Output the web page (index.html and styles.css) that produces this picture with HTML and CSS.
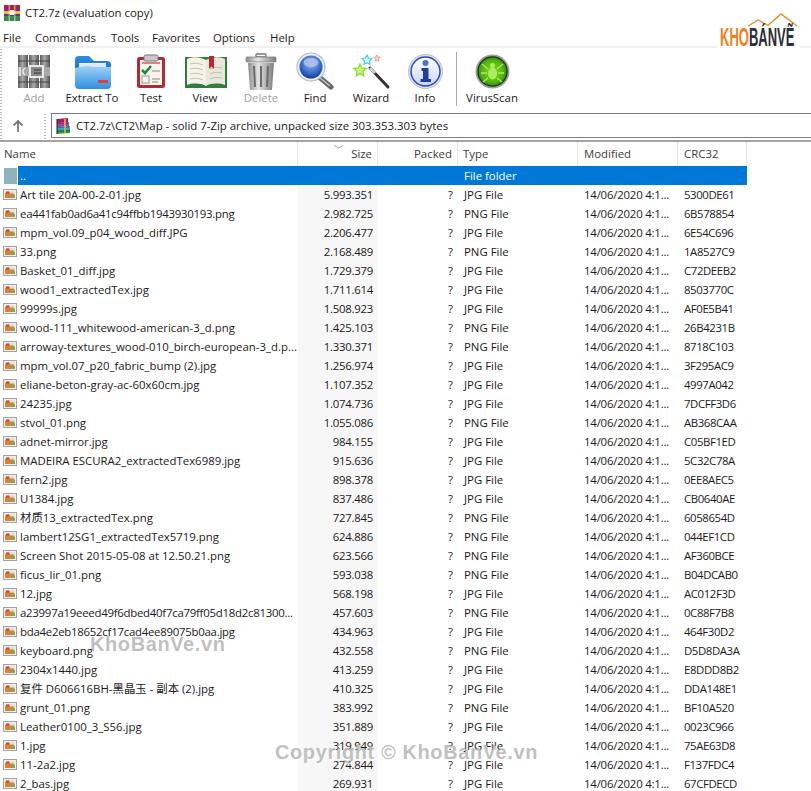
FILE: index.html
```html
<!DOCTYPE html>
<html lang="en">
<head>
<meta charset="utf-8">
<title>CT2.7z (evaluation copy)</title>
<link rel="stylesheet" href="styles.css">
</head>
<body>
<svg class="defs" aria-hidden="true">
  <defs>
    <linearGradient id="gBook" x1="0" y1="0" x2="1" y2="0"><stop offset="0" stop-color="#5f5f5f"/><stop offset=".45" stop-color="#a8a8a8"/><stop offset="1" stop-color="#555"/></linearGradient>
    <linearGradient id="gFolder" x1="0" y1="0" x2="0" y2="1"><stop offset="0" stop-color="#9fd2f7"/><stop offset="1" stop-color="#2f8fe0"/></linearGradient>
    <linearGradient id="gFolderBack" x1="0" y1="0" x2="0" y2="1"><stop offset="0" stop-color="#2e8fe4"/><stop offset="1" stop-color="#1565b8"/></linearGradient>
    <linearGradient id="gTrash" x1="0" y1="0" x2="1" y2="0"><stop offset="0" stop-color="#8d8d8d"/><stop offset=".4" stop-color="#e4e4e4"/><stop offset="1" stop-color="#7d7d7d"/></linearGradient>
    <radialGradient id="gLens" cx=".5" cy=".35" r=".65"><stop offset="0" stop-color="#9db6ec"/><stop offset=".6" stop-color="#3e71cc"/><stop offset="1" stop-color="#123d97"/></radialGradient>
    <radialGradient id="gVirus" cx=".5" cy=".5" r=".55"><stop offset="0" stop-color="#84dc22"/><stop offset=".7" stop-color="#54b512"/><stop offset="1" stop-color="#2d7d0c"/></radialGradient>
    <linearGradient id="gInfo" x1="0" y1="0" x2="0" y2="1"><stop offset="0" stop-color="#ffffff"/><stop offset="1" stop-color="#c9d5f2"/></linearGradient>
    <symbol id="file" viewBox="0 0 14 11">
      <rect x=".5" y=".5" width="13" height="10" fill="#f2f2f2" stroke="#a2a2a2"/>
      <rect x="2" y="2" width="10" height="7" fill="#e6e0d4"/>
      <path d="M2 9 L2 4 L6 2.500 L8 5 L10 4 L12 7 V9 Z" fill="#d9803a"/>
      <rect x="3" y="2.500" width="3" height="2" fill="#c9473a"/>
      <rect x="8" y="5.500" width="3.500" height="3.500" fill="#8aa24a"/>
    </symbol>
  </defs>
</svg>

<header class="title-bar">
  <svg class="title-icon" viewBox="0 0 16 16">
    <rect x="0" y="0" width="16" height="5" fill="#a8263a"/>
    <rect x="0" y="5" width="16" height="6" fill="#6a2f9e"/>
    <rect x="0" y="11" width="16" height="5" fill="#3f8a4a"/>
    <rect x="0" y="6" width="16" height="3" fill="#e8c23a"/>
    <rect x="6" y="5" width="4" height="5" fill="#fff3c0"/>
    <path d="M5.200 0V16M10.800 0V16" stroke="#fff" stroke-width=".7"/>
  </svg>
  <span class="title-text">CT2.7z (evaluation copy)</span>
</header>

<nav class="menu-bar">
  <span>File</span>
  <span>Commands</span>
  <span>Tools</span>
  <span>Favorites</span>
  <span>Options</span>
  <span>Help</span>
</nav>

<section class="toolbar">
  <div class="tool tool-add disabled">
    <svg class="tool-icon" viewBox="0 0 44 38">
      <rect x="6" y="3" width="10" height="33" fill="url(#gBook)"/>
      <rect x="17" y="3" width="10" height="33" fill="url(#gBook)"/>
      <rect x="28" y="3" width="10" height="33" fill="url(#gBook)"/>
      <path d="M6 9H38M6 30H38" stroke="#444" stroke-width="1"/>
      <rect x="6" y="15" width="32" height="9" fill="#a8a8a8"/>
      <rect x="18" y="14" width="13" height="11" fill="#8a8a8a" stroke="#f2f2f2" stroke-width="1.800"/>
      <path d="M22 18H29M22 21H29" stroke="#333" stroke-width="1"/>
      <path d="M8 15v9M13 16a4 4 0 0 0 0 7" stroke="#f0f0f0" stroke-width="1.400" fill="none"/>
    </svg>
    <span class="tool-label">Add</span>
  </div>
  <div class="tool tool-extract">
    <svg class="tool-icon" viewBox="0 0 44 38">
      <path d="M5 8a4 4 0 0 1 4-4h10l5 5h13a4 4 0 0 1 4 4v10H5Z" fill="url(#gFolderBack)"/>
      <path d="M9 11H36V22H9Z" fill="#f2f7fb"/>
      <path d="M9 13H36M9 15H36M9 17H36M9 19H36" stroke="#b9cfe3" stroke-width=".7"/>
      <path d="M5 16l5-1 8-1 5 1H41V33a4 4 0 0 1-4 4H9a4 4 0 0 1-4-4Z" fill="url(#gFolder)"/>
      <rect x="28" y="28" width="10" height="3" fill="#d8433f"/>
    </svg>
    <span class="tool-label">Extract To</span>
  </div>
  <div class="tool tool-test">
    <svg class="tool-icon" viewBox="0 0 44 38">
      <rect x="8" y="5" width="28" height="31" rx="2.500" fill="#a92d33"/>
      <rect x="11" y="8" width="22" height="25" fill="#f7f3ec"/>
      <rect x="15" y="3" width="14" height="6" rx="1.500" fill="#c9c9c9" stroke="#777"/>
      <path d="M13 18l3 3 6-7" fill="none" stroke="#1e8a30" stroke-width="2.600"/>
      <rect x="13" y="24" width="7" height="7" fill="none" stroke="#999"/>
      <path d="M23 19H31M23 27H31M23 30H29" stroke="#888" stroke-width="1.200"/>
      <path d="M13 11H31" stroke="#c8564e" stroke-width="1.400"/>
    </svg>
    <span class="tool-label">Test</span>
  </div>
  <div class="tool tool-view">
    <svg class="tool-icon" viewBox="0 0 44 38">
      <path d="M2 5H44V36H2Z" fill="#2f7d3b"/>
      <path d="M4 7C10 4 18 5 23 8V34C18 31 10 31 4 33Z" fill="#f4f2e9"/>
      <path d="M42 7C36 4 28 5 23 8V34C28 31 36 31 42 33Z" fill="#e9e6da"/>
      <path d="M7 12C11 11 16 11 20 13M7 17C11 16 16 16 20 18M7 22C11 21 16 21 20 23M7 27C11 26 16 26 20 28M27 17C31 15 35 15 39 16M27 22C31 20 35 20 39 21M27 27C31 25 35 25 39 26" stroke="#c6c2b2" fill="none"/>
      <path d="M26 4H31V17L28.500 14.500L26 17Z" fill="#b5283a"/>
    </svg>
    <span class="tool-label">View</span>
  </div>
  <div class="tool tool-delete disabled">
    <svg class="tool-icon" viewBox="0 0 44 38">
      <rect x="17" y="2" width="10" height="3" rx="1" fill="none" stroke="#777" stroke-width="1.400"/>
      <rect x="7" y="5" width="30" height="5" rx="1" fill="url(#gTrash)" stroke="#777" stroke-width=".7"/>
      <path d="M9 11H35L33 38H11Z" fill="url(#gTrash)"/>
      <path d="M15 14L16 35M22 14V35M29 14L28 35" stroke="#6a6a6a" stroke-width="2"/>
    </svg>
    <span class="tool-label">Delete</span>
  </div>
  <div class="tool tool-find">
    <svg class="tool-icon" viewBox="0 0 44 38">
      <path d="M25 24L38 35" stroke="#666" stroke-width="5" stroke-linecap="round"/>
      <path d="M26 25L37 34" stroke="#c4c4c4" stroke-width="1.500"/>
      <circle cx="18" cy="15" r="14" fill="#e9edf4" stroke="#b4bbc6" stroke-width="1.200"/>
      <circle cx="18" cy="15" r="11.500" fill="url(#gLens)"/>
      <ellipse cx="18" cy="10.500" rx="7.500" ry="4.500" fill="#b2c5ee" opacity=".8"/>
    </svg>
    <span class="tool-label">Find</span>
  </div>
  <div class="tool tool-wizard">
    <svg class="tool-icon" viewBox="0 0 44 38">
      <path d="M21 16L39 35" stroke="#333" stroke-width="3" stroke-linecap="round"/>
      <path d="M21 16L26 21" stroke="#d0d0d0" stroke-width="3"/>
      <path d="M18 3L19.500 6 23 6.500 20.500 9 21 12.500 18 10.800 15 12.500 15.500 9 13 6.500 16.500 6Z" fill="#d6f8ff" stroke="#4ccbea" stroke-width="1.200"/>
      <path d="M11 12L12.800 16 17.200 16.500 14 19.500 14.800 24 11 21.800 7.200 24 8 19.500 4.800 16.500 9.200 16Z" fill="#c6f57a" stroke="#8ade3a" stroke-width="1.300"/>
      <path d="M28 3L29 5 31.300 5.300 29.600 6.900 30 9.200 28 8.100 26 9.200 26.400 6.900 24.700 5.300 27 5Z" fill="#f9d3d5" stroke="#e58b90" stroke-width=".8"/>
    </svg>
    <span class="tool-label">Wizard</span>
  </div>
  <div class="tool tool-info">
    <svg class="tool-icon" viewBox="0 0 44 38">
      <circle cx="22.500" cy="19.500" r="17" fill="#dfe3ea" stroke="#b9bec8"/>
      <circle cx="22.500" cy="19.500" r="14.500" fill="url(#gInfo)" stroke="#2b49b0" stroke-width="1.500"/>
      <circle cx="22.500" cy="11" r="3" fill="#4a73d0"/>
      <path d="M18.500 16H25.500V27H28V30H17.500V27H20V19H18.500Z" fill="#24409f"/>
    </svg>
    <span class="tool-label">Info</span>
  </div>
  <div class="tool-sep"></div>
  <div class="tool tool-virus">
    <svg class="tool-icon" viewBox="0 0 44 38">
      <circle cx="22.500" cy="19.500" r="17" fill="#9a9f98"/>
      <circle cx="22.500" cy="19.500" r="15.200" fill="#1e2e22"/>
      <circle cx="22.500" cy="19.500" r="14" fill="url(#gVirus)"/>
      <ellipse cx="22.500" cy="21.500" rx="4.500" ry="6" fill="#a9ee5e"/>
      <circle cx="22.500" cy="13.500" r="2.500" fill="#a9ee5e"/>
      <path d="M18 17L12 12M27 17L33 12M17 21H11M28 21H34M18 26L13 30M27 26L32 30" stroke="#a9ee5e" stroke-width="1.300"/>
    </svg>
    <span class="tool-label">VirusScan</span>
  </div>
</section>

<section class="address-row">
  <div class="up-cell">
    <svg class="up-icon" viewBox="0 0 12 14"><path d="M6 13V2M1.500 6.500L6 2L10.500 6.500" fill="none" stroke="#7a7a7a" stroke-width="1.800"/></svg>
  </div>
  <div class="address-box">
    <svg class="rar-icon" viewBox="0 0 16 16">
      <path d="M2 1L13 0V4L2 5Z" fill="#a3214f"/>
      <path d="M2 5L14 4V8L2 9Z" fill="#b03cb5"/>
      <path d="M2 9L15 8V12L2 13Z" fill="#2aa9c9"/>
      <path d="M2 12.500L15 11.500V15L2 16Z" fill="#3d9a3d"/>
      <path d="M2 1V16" stroke="#222" stroke-width="1"/>
      <path d="M2 5H13M2 9H14M2 13H15" stroke="#222" stroke-width=".6"/>
      <rect x="9" y="1" width="2" height="14" fill="#d9b84a" opacity=".8"/>
    </svg>
    <span>CT2.7z\CT2\Map - solid 7-Zip archive, unpacked size 303.353.303 bytes</span>
  </div>
</section>

<main class="list">
  <div class="list-head">
    <span class="c-name head-cell">Name</span>
    <span class="c-size head-cell sorted">Size</span>
    <span class="c-packed head-cell">Packed</span>
    <span class="c-type head-cell">Type</span>
    <span class="c-mod head-cell">Modified</span>
    <span class="c-crc head-cell">CRC32</span>
  </div>
  <div class="row row-selected">
    <span class="c-name"><span class="folder-icon"></span><span class="name-sel">..</span></span>
    <span class="c-size"></span><span class="c-packed"></span>
    <span class="c-type">File folder</span><span class="c-mod"></span><span class="c-crc"></span>
  </div>
  <div class="row"><span class="c-name"><svg class="file-icon"><use href="#file"/></svg>Art tile 20A-00-2-01.jpg</span><span class="c-size">5.993.351</span><span class="c-packed">?</span><span class="c-type">JPG File</span><span class="c-mod">14/06/2020 4:1...</span><span class="c-crc">5300DE61</span></div>
  <div class="row"><span class="c-name hash"><svg class="file-icon"><use href="#file"/></svg>ea441fab0ad6a41c94ffbb1943930193.png</span><span class="c-size">2.982.725</span><span class="c-packed">?</span><span class="c-type">PNG File</span><span class="c-mod">14/06/2020 4:1...</span><span class="c-crc">6B578854</span></div>
  <div class="row"><span class="c-name"><svg class="file-icon"><use href="#file"/></svg>mpm_vol.09_p04_wood_diff.JPG</span><span class="c-size">2.206.477</span><span class="c-packed">?</span><span class="c-type">JPG File</span><span class="c-mod">14/06/2020 4:1...</span><span class="c-crc">6E54C696</span></div>
  <div class="row"><span class="c-name"><svg class="file-icon"><use href="#file"/></svg>33.png</span><span class="c-size">2.168.489</span><span class="c-packed">?</span><span class="c-type">PNG File</span><span class="c-mod">14/06/2020 4:1...</span><span class="c-crc">1A8527C9</span></div>
  <div class="row"><span class="c-name"><svg class="file-icon"><use href="#file"/></svg>Basket_01_diff.jpg</span><span class="c-size">1.729.379</span><span class="c-packed">?</span><span class="c-type">JPG File</span><span class="c-mod">14/06/2020 4:1...</span><span class="c-crc">C72DEEB2</span></div>
  <div class="row"><span class="c-name"><svg class="file-icon"><use href="#file"/></svg>wood1_extractedTex.jpg</span><span class="c-size">1.711.614</span><span class="c-packed">?</span><span class="c-type">JPG File</span><span class="c-mod">14/06/2020 4:1...</span><span class="c-crc">8503770C</span></div>
  <div class="row"><span class="c-name"><svg class="file-icon"><use href="#file"/></svg>99999s.jpg</span><span class="c-size">1.508.923</span><span class="c-packed">?</span><span class="c-type">JPG File</span><span class="c-mod">14/06/2020 4:1...</span><span class="c-crc">AF0E5B41</span></div>
  <div class="row"><span class="c-name"><svg class="file-icon"><use href="#file"/></svg>wood-111_whitewood-american-3_d.png</span><span class="c-size">1.425.103</span><span class="c-packed">?</span><span class="c-type">PNG File</span><span class="c-mod">14/06/2020 4:1...</span><span class="c-crc">26B4231B</span></div>
  <div class="row"><span class="c-name"><svg class="file-icon"><use href="#file"/></svg>arroway-textures_wood-010_birch-european-3_d.p...</span><span class="c-size">1.330.371</span><span class="c-packed">?</span><span class="c-type">PNG File</span><span class="c-mod">14/06/2020 4:1...</span><span class="c-crc">8718C103</span></div>
  <div class="row"><span class="c-name"><svg class="file-icon"><use href="#file"/></svg>mpm_vol.07_p20_fabric_bump (2).jpg</span><span class="c-size">1.256.974</span><span class="c-packed">?</span><span class="c-type">JPG File</span><span class="c-mod">14/06/2020 4:1...</span><span class="c-crc">3F295AC9</span></div>
  <div class="row"><span class="c-name"><svg class="file-icon"><use href="#file"/></svg>eliane-beton-gray-ac-60x60cm.jpg</span><span class="c-size">1.107.352</span><span class="c-packed">?</span><span class="c-type">JPG File</span><span class="c-mod">14/06/2020 4:1...</span><span class="c-crc">4997A042</span></div>
  <div class="row"><span class="c-name"><svg class="file-icon"><use href="#file"/></svg>24235.jpg</span><span class="c-size">1.074.736</span><span class="c-packed">?</span><span class="c-type">JPG File</span><span class="c-mod">14/06/2020 4:1...</span><span class="c-crc">7DCFF3D6</span></div>
  <div class="row"><span class="c-name"><svg class="file-icon"><use href="#file"/></svg>stvol_01.png</span><span class="c-size">1.055.086</span><span class="c-packed">?</span><span class="c-type">PNG File</span><span class="c-mod">14/06/2020 4:1...</span><span class="c-crc">AB368CAA</span></div>
  <div class="row"><span class="c-name"><svg class="file-icon"><use href="#file"/></svg>adnet-mirror.jpg</span><span class="c-size">984.155</span><span class="c-packed">?</span><span class="c-type">JPG File</span><span class="c-mod">14/06/2020 4:1...</span><span class="c-crc">C05BF1ED</span></div>
  <div class="row"><span class="c-name"><svg class="file-icon"><use href="#file"/></svg>MADEIRA ESCURA2_extractedTex6989.jpg</span><span class="c-size">915.636</span><span class="c-packed">?</span><span class="c-type">JPG File</span><span class="c-mod">14/06/2020 4:1...</span><span class="c-crc">5C32C78A</span></div>
  <div class="row"><span class="c-name"><svg class="file-icon"><use href="#file"/></svg>fern2.jpg</span><span class="c-size">898.378</span><span class="c-packed">?</span><span class="c-type">JPG File</span><span class="c-mod">14/06/2020 4:1...</span><span class="c-crc">0EE8AEC5</span></div>
  <div class="row"><span class="c-name"><svg class="file-icon"><use href="#file"/></svg>U1384.jpg</span><span class="c-size">837.486</span><span class="c-packed">?</span><span class="c-type">JPG File</span><span class="c-mod">14/06/2020 4:1...</span><span class="c-crc">CB0640AE</span></div>
  <div class="row"><span class="c-name"><svg class="file-icon"><use href="#file"/></svg>材质13_extractedTex.png</span><span class="c-size">727.845</span><span class="c-packed">?</span><span class="c-type">PNG File</span><span class="c-mod">14/06/2020 4:1...</span><span class="c-crc">6058654D</span></div>
  <div class="row"><span class="c-name"><svg class="file-icon"><use href="#file"/></svg>lambert12SG1_extractedTex5719.png</span><span class="c-size">624.886</span><span class="c-packed">?</span><span class="c-type">PNG File</span><span class="c-mod">14/06/2020 4:1...</span><span class="c-crc">044EF1CD</span></div>
  <div class="row"><span class="c-name"><svg class="file-icon"><use href="#file"/></svg>Screen Shot 2015-05-08 at 12.50.21.png</span><span class="c-size">623.566</span><span class="c-packed">?</span><span class="c-type">PNG File</span><span class="c-mod">14/06/2020 4:1...</span><span class="c-crc">AF360BCE</span></div>
  <div class="row"><span class="c-name"><svg class="file-icon"><use href="#file"/></svg>ficus_lir_01.png</span><span class="c-size">593.038</span><span class="c-packed">?</span><span class="c-type">PNG File</span><span class="c-mod">14/06/2020 4:1...</span><span class="c-crc">B04DCAB0</span></div>
  <div class="row"><span class="c-name"><svg class="file-icon"><use href="#file"/></svg>12.jpg</span><span class="c-size">568.198</span><span class="c-packed">?</span><span class="c-type">JPG File</span><span class="c-mod">14/06/2020 4:1...</span><span class="c-crc">AC012F3D</span></div>
  <div class="row"><span class="c-name hash"><svg class="file-icon"><use href="#file"/></svg>a23997a19eeed49f6dbed40f7ca79ff05d18d2c81300...</span><span class="c-size">457.603</span><span class="c-packed">?</span><span class="c-type">PNG File</span><span class="c-mod">14/06/2020 4:1...</span><span class="c-crc">0C88F7B8</span></div>
  <div class="row"><span class="c-name hash"><svg class="file-icon"><use href="#file"/></svg>bda4e2eb18652cf17cad4ee89075b0aa.jpg</span><span class="c-size">434.963</span><span class="c-packed">?</span><span class="c-type">JPG File</span><span class="c-mod">14/06/2020 4:1...</span><span class="c-crc">464F30D2</span></div>
  <div class="row"><span class="c-name"><svg class="file-icon"><use href="#file"/></svg>keyboard.png</span><span class="c-size">432.558</span><span class="c-packed">?</span><span class="c-type">PNG File</span><span class="c-mod">14/06/2020 4:1...</span><span class="c-crc">D5D8DA3A</span></div>
  <div class="row"><span class="c-name"><svg class="file-icon"><use href="#file"/></svg>2304x1440.jpg</span><span class="c-size">413.259</span><span class="c-packed">?</span><span class="c-type">JPG File</span><span class="c-mod">14/06/2020 4:1...</span><span class="c-crc">E8DDD8B2</span></div>
  <div class="row"><span class="c-name"><svg class="file-icon"><use href="#file"/></svg>复件 D606616BH-黑晶玉 - 副本 (2).jpg</span><span class="c-size">410.325</span><span class="c-packed">?</span><span class="c-type">JPG File</span><span class="c-mod">14/06/2020 4:1...</span><span class="c-crc">DDA148E1</span></div>
  <div class="row"><span class="c-name"><svg class="file-icon"><use href="#file"/></svg>grunt_01.png</span><span class="c-size">383.992</span><span class="c-packed">?</span><span class="c-type">PNG File</span><span class="c-mod">14/06/2020 4:1...</span><span class="c-crc">BF10A520</span></div>
  <div class="row"><span class="c-name"><svg class="file-icon"><use href="#file"/></svg>Leather0100_3_S56.jpg</span><span class="c-size">351.889</span><span class="c-packed">?</span><span class="c-type">JPG File</span><span class="c-mod">14/06/2020 4:1...</span><span class="c-crc">0023C966</span></div>
  <div class="row"><span class="c-name"><svg class="file-icon"><use href="#file"/></svg>1.jpg</span><span class="c-size">319.949</span><span class="c-packed">?</span><span class="c-type">JPG File</span><span class="c-mod">14/06/2020 4:1...</span><span class="c-crc">75AE63D8</span></div>
  <div class="row"><span class="c-name"><svg class="file-icon"><use href="#file"/></svg>11-2a2.jpg</span><span class="c-size">274.844</span><span class="c-packed">?</span><span class="c-type">JPG File</span><span class="c-mod">14/06/2020 4:1...</span><span class="c-crc">F137FDC4</span></div>
  <div class="row"><span class="c-name"><svg class="file-icon"><use href="#file"/></svg>2_bas.jpg</span><span class="c-size">269.931</span><span class="c-packed">?</span><span class="c-type">JPG File</span><span class="c-mod">14/06/2020 4:1...</span><span class="c-crc">67CFDECD</span></div>
</main>

<div class="logo">
  <svg class="logo-roof" viewBox="0 0 83 16"><path d="M31 14L41 8L51 13.500L64 2L80 14" fill="none" stroke="#ef8a2a" stroke-width="1.400"/></svg>
  <div class="logo-text"><span class="logo-kho">KHO</span><span class="logo-ban">BÁNVẼ</span></div>
</div>
<div class="wm wm-one">KhoBanVe.vn</div>
<div class="wm wm-two">Copyright © KhoBanVe.vn</div>
</body>
</html>
```

FILE: styles.css
```css
* { box-sizing: border-box; }

html, body {
  margin: 0;
  height: 100%;
  overflow: hidden;
  background: #fff;
}

body {
  position: relative;
  font: 11.4px/16px "Open Sans", "Noto Sans CJK SC", sans-serif;
  color: #1a1a1a;
}

.defs { display: block; width: 0; height: 0; }

/* title */
.title-bar {
  height: 26px;
  display: flex;
  align-items: center;
  padding-left: 4px;
}
.title-icon { width: 16px; height: 16px; margin-right: 5px; }

/* menu */
.menu-bar {
  height: 20px;
  display: grid;
  grid-template-columns: 32px 76px 41px 61px 57px auto;
  align-items: center;
  padding: 4px 0 0 3px;
}

/* toolbar */
.toolbar {
  height: 67px;
  display: flex;
  align-items: flex-start;
  border-top: 2px solid #f0f0f0;
  padding: 4px 0 0 8px;
  background-image: radial-gradient(circle, #bdbdbd 0.6px, transparent 0.8px);
  background-size: 2px 3px;
  background-repeat: repeat-y;
  background-position: 0 0;
}
.tool {
  display: flex;
  flex-direction: column;
  align-items: center;
  flex: none;
}
.tool-icon { width: 44px; height: 38px; display: block; }
.tool-label { line-height: 16px; }
.disabled .tool-label { color: #a0a0a0; }
.tool-add { width: 52px; }
.tool-extract { width: 64px; }
.tool-test { width: 54px; }
.tool-view { width: 54px; }
.tool-delete { width: 58px; }
.tool-find { width: 50px; }
.tool-wizard { width: 62px; }
.tool-info { width: 46px; }
.tool-virus { width: 64px; }
.tool-sep {
  width: 1px;
  height: 54px;
  margin: 0 3px 0 8px;
  background: #a8a8a8;
}

/* address */
.address-row {
  height: 29px;
  display: flex;
  align-items: flex-start;
  border-bottom: 2px solid #a3a3a3;
}
.up-cell {
  width: 51px;
  height: 27px;
  display: flex;
  align-items: center;
  padding: 0 0 2px 12px;
  background-image:
    radial-gradient(circle, #bdbdbd 0.6px, transparent 0.8px),
    radial-gradient(circle, #bdbdbd 0.6px, transparent 0.8px);
  background-size: 2px 3px, 2px 3px;
  background-repeat: repeat-y, repeat-y;
  background-position: 0 0, 44px 0;
}
.up-icon { width: 12px; height: 14px; }
.address-box {
  flex: 1;
  height: 25px;
  display: flex;
  align-items: center;
  border: 1px solid #7d7d7d;
  border-right: 0;
  padding-left: 3px;
}
.rar-icon { width: 16px; height: 16px; margin-right: 5px; flex: none; }

/* list */
.list { width: 747px; }
.list-head, .row {
  display: grid;
  grid-template-columns: 298px 80px 80px 120px 100px 69px;
}
.list-head { height: 24px; align-items: center; }
.row { height: 19px; line-height: 19px; }
.head-cell {
  position: relative;
  height: 24px;
  line-height: 24px;
  border-right: 1px solid #e5e5e5;
  color: #3c3c3c;
}
.list-head .c-name { padding-left: 4px; }
.sorted::before {
  content: "";
  position: absolute;
  left: 37px;
  top: 0;
  width: 6px;
  height: 6px;
  transform: scale(1, .6) rotate(45deg);
  border: solid #a5a5a5;
  border-width: 0 1px 1px 0;
}
.c-name {
  display: flex;
  align-items: center;
  white-space: nowrap;
  padding-left: 3px;
  overflow: hidden;
}
.hash { letter-spacing: -.25px; }
.c-size { text-align: right; padding-right: 5px; letter-spacing: -.25px; }
.c-packed { text-align: right; padding-right: 5px; }
.c-type { padding-left: 6px; }
.c-mod { padding-left: 6px; white-space: nowrap; letter-spacing: -.2px; }
.c-crc { padding-left: 6px; letter-spacing: -.4px; }
.list-head .c-type { padding-left: 5px; }
.list-head .c-size,
.list-head .c-mod,
.list-head .c-crc { letter-spacing: 0; }

.row .c-size { background: #f7f7f7; }
.file-icon { width: 14px; height: 11px; margin-right: 3px; flex: none; }

.row-selected .c-name { background: none; padding-left: 4px; }
.row-selected { color: #fff; }
.row-selected .c-size,
.row-selected .c-packed,
.row-selected .c-type,
.row-selected .c-mod,
.row-selected .c-crc { background: #0078d7; }
.folder-icon {
  width: 13px;
  height: 16px;
  background: #8fb3ba;
  flex: none;
}
.name-sel {
  flex: 1;
  align-self: stretch;
  margin-left: 1px;
  background: #0078d7;
  padding-left: 2px;
}

/* logo overlay */
.logo {
  position: absolute;
  left: 717px;
  top: 12px;
  width: 83px;
  height: 37px;
  background: #fff;
}
.logo-roof {
  position: absolute;
  left: 0;
  top: 0;
  width: 83px;
  height: 16px;
}
.logo-text {
  position: absolute;
  left: 3px;
  top: 13px;
  font: 700 25px/25px "Liberation Sans", sans-serif;
  white-space: nowrap;
  transform: scaleX(.52);
  transform-origin: 0 0;
}
.logo-kho { color: #f07f1e; }
.logo-ban { color: #2d2f3a; }

/* watermarks */
.wm {
  position: absolute;
  font: 700 20px/24px "Liberation Sans", sans-serif;
  letter-spacing: .6px;
  color: rgba(150, 150, 150, .6);
  text-shadow: 1px 1px 0 rgba(255, 255, 255, .8);
  white-space: nowrap;
}
.wm-one { left: 90px; top: 632px; }
.wm-two { left: 275px; top: 740px; }
```
